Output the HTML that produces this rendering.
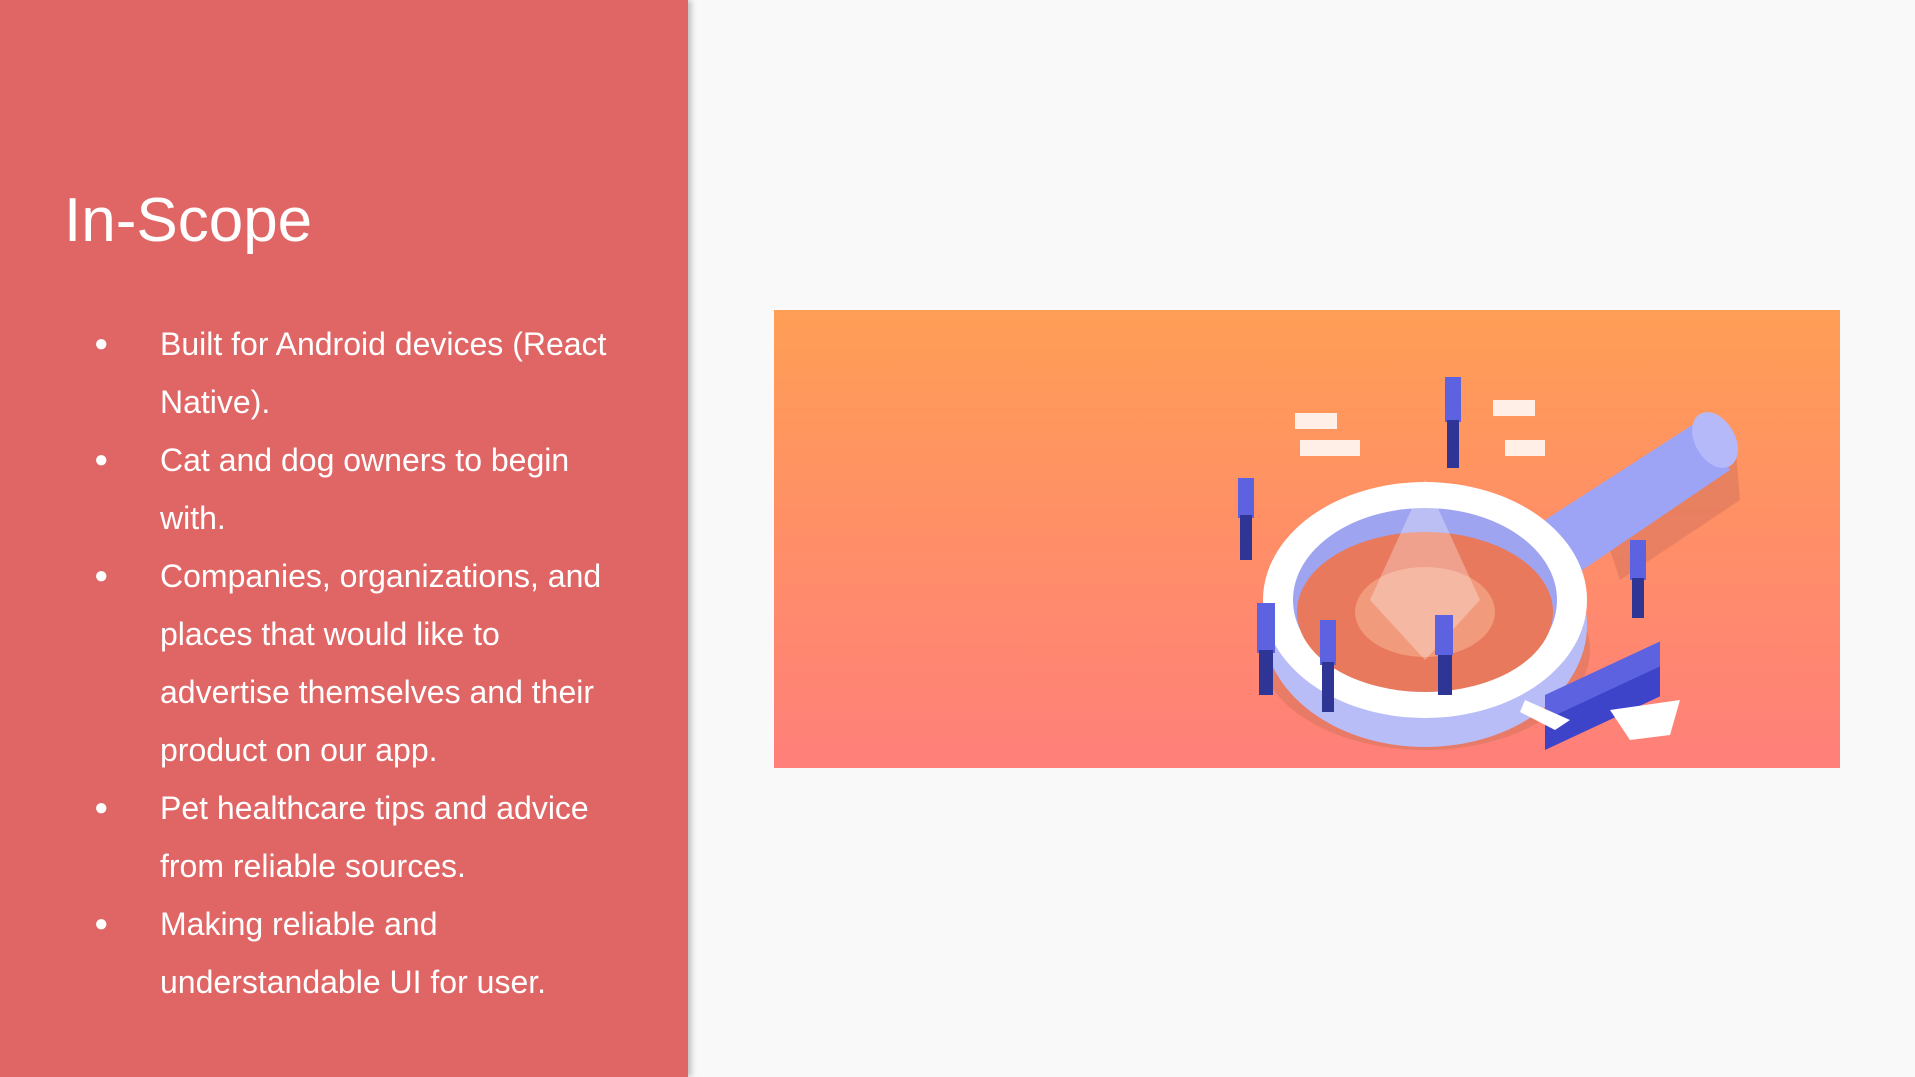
<!DOCTYPE html>
<html><head><style>
html,body{margin:0;padding:0;width:1915px;height:1077px;overflow:hidden;background:#f9f9f9;font-family:"Liberation Sans",Roboto,sans-serif}
#left{position:absolute;left:0;top:0;width:688px;height:1077px;background:#e06666;box-shadow:3px 0 6px rgba(0,0,0,.25)}
h1{position:absolute;left:64px;top:185px;margin:0;font-weight:normal;color:#fff;font-size:62px;line-height:72px}
ul{position:absolute;left:0;top:315px;margin:0;padding:0;list-style:none;color:#fff;font-size:32px;line-height:58px}
li{position:relative;padding-left:160px;width:460px}
li:before{content:"●";position:absolute;left:94px;font-size:24px}
svg{position:absolute;left:0;top:0}
</style></head><body>
<div id="left">
<h1>In-Scope</h1>
<ul>
<li>Built for Android devices (React Native).</li>
<li>Cat and dog owners to begin with.</li>
<li>Companies, organizations, and places that would like to advertise themselves and their product on our app.</li>
<li>Pet healthcare tips and advice from reliable sources.</li>
<li>Making reliable and understandable UI for user.</li>
</ul>
</div>
<svg width="1915" height="1077">
<defs><linearGradient id="g" x1="0" y1="0" x2="0" y2="1"><stop offset="0" stop-color="#ff9e55"/><stop offset="1" stop-color="#ff7f7a"/></linearGradient></defs>
<rect x="774" y="310" width="1066" height="458" fill="url(#g)"/>
<polygon points="1600,520 1735,440 1740,500 1620,580" fill="#d8765e" opacity=".6"/>
<ellipse cx="1425" cy="650" rx="165" ry="100" fill="#d8765e" opacity=".6"/>
<polygon points="1545,520 1700,420 1730,470 1575,575" fill="#9da3f5"/>
<ellipse cx="1715" cy="440" rx="20" ry="30" fill="#b5b9fa" transform="rotate(-30 1715 440)"/>
<ellipse cx="1425" cy="625" rx="162" ry="122" fill="#b9bdf7"/>
<ellipse cx="1425" cy="600" rx="162" ry="118" fill="#fff"/>
<ellipse cx="1425" cy="600" rx="132" ry="92" fill="#9fa4f0"/>
<ellipse cx="1425" cy="612" rx="128" ry="80" fill="#e8795c"/>
<ellipse cx="1425" cy="612" rx="70" ry="45" fill="#f5a88a" opacity=".7"/>
<polygon points="1425,480 1480,600 1425,660 1370,600" fill="#fff" opacity=".3"/>
<g fill="#5c62e0">
<rect x="1238" y="478" width="16" height="40"/><rect x="1240" y="515" width="12" height="45" fill="#2f3594"/>
<rect x="1445" y="377" width="16" height="45"/><rect x="1447" y="420" width="12" height="48" fill="#2f3594"/>
<rect x="1257" y="603" width="18" height="50"/><rect x="1259" y="650" width="14" height="45" fill="#2f3594"/>
<rect x="1320" y="620" width="16" height="45"/><rect x="1322" y="662" width="12" height="50" fill="#2f3594"/>
<rect x="1435" y="615" width="18" height="40"/><rect x="1438" y="655" width="14" height="40" fill="#2f3594"/>
<rect x="1630" y="540" width="16" height="40"/><rect x="1632" y="578" width="12" height="40" fill="#2f3594"/>
</g>
<g transform="translate(1545,675) skewY(-25)"><rect x="0" y="30" width="115" height="45" fill="#3d44c9"/><rect x="0" y="20" width="115" height="25" fill="#5c62e0"/></g>
<polygon points="1525,700 1570,720 1555,730 1520,712" fill="#fff"/>
<polygon points="1610,710 1680,700 1670,735 1630,740" fill="#fff"/>
<g fill="#fff" opacity=".85"><rect x="1295" y="413" width="42" height="16"/><rect x="1300" y="440" width="60" height="16"/><rect x="1493" y="400" width="42" height="16"/><rect x="1505" y="440" width="40" height="16"/></g>
</svg>
</body></html>
